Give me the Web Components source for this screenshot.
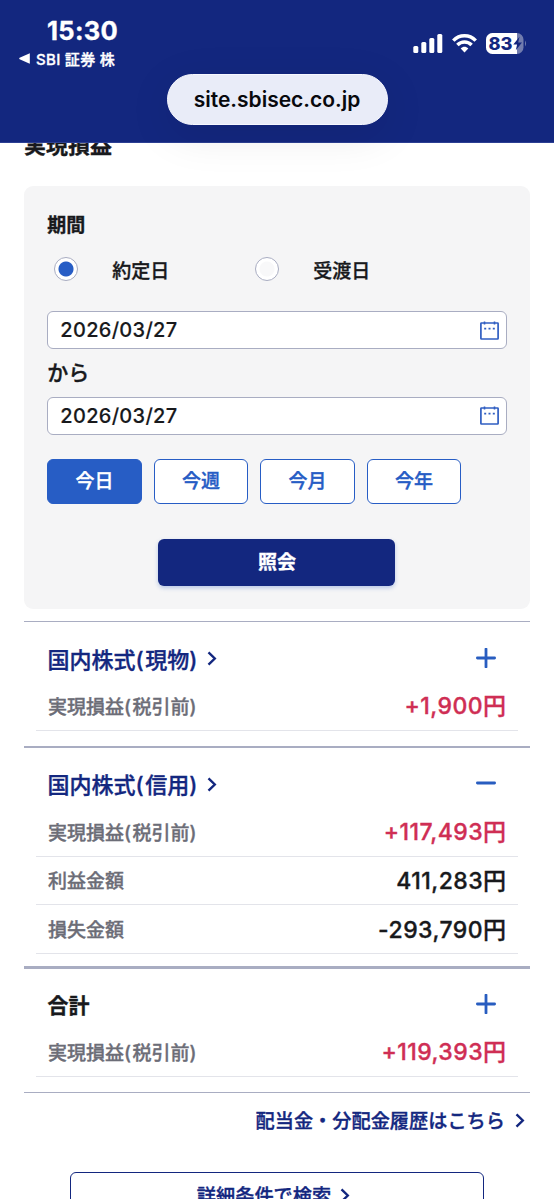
<!DOCTYPE html>
<html lang="ja">
<head>
<meta charset="utf-8">
<title>実現損益</title>
<style>
  body {
    margin: 0;
    width: 554px;
    height: 1199px;
    overflow: hidden;
    background: #fff;
    color: #18191c;
    font-family: Inter, "Noto Sans CJK JP", sans-serif;
    font-weight: 500;
    -webkit-text-stroke: 0.35px currentColor;
    --navy: #13277f;
    --blue: #275dc5;
    --line: #a9adc2;
  }
</style>
</head>
<body>
<profit-page></profit-page>
<script>
class StatusHeader extends HTMLElement {
  connectedCallback() {
    this.attachShadow({ mode: 'open' });
    this.shadowRoot.innerHTML = `
      <style>
        :host {
          display: flex;
          flex-direction: column;
          height: 143px;
          box-sizing: border-box;
          background: var(--navy);
          color: #fff;
          border-bottom: 1px solid #2c3f93;
          position: relative;
          z-index: 2;
        }
        .status {
          display: flex;
          justify-content: space-between;
          height: 74px;
        }
        .left { padding: 17px 0 0 19px; }
        .time {
          font-size: 25.5px;
          line-height: 28px;
          font-weight: 700;
          padding-left: 28px;
          letter-spacing: 0.3px;
        }
        .back {
          display: flex;
          align-items: center;
          height: 27px;
          font-size: 15px;
          letter-spacing: 0.3px;
          gap: 6px;
          white-space: nowrap;
        }
        .right {
          display: flex;
          gap: 9px;
          padding: 33px 27px 0 0;
        }
        svg { display: block; -webkit-text-stroke: 0; }
        .url {
          align-self: center;
          width: 221px;
          height: 51px;
          border-radius: 26px;
          box-sizing: border-box;
          border: 1px solid #f7f8ff;
          background: #e9ecf8;
          color: #08090d;
          font-size: 21px;
          line-height: 49px;
          text-align: center;
          font-weight: 600;
          -webkit-text-stroke: 0;
          box-shadow: 0 10px 45px rgba(0, 0, 0, 0.09);
        }
      </style>
      <div class="status">
        <div class="left">
          <div class="time">15:30</div>
          <div class="back">
            <svg width="11" height="11" viewBox="0 0 11 11"><path d="M10.8.2v10.6L.6 6.2q-.8-.7 0-1.4z" fill="#fff"/></svg>
            <span>SBI 証券 株</span>
          </div>
        </div>
        <div class="right">
          <svg width="30" height="21" viewBox="0 0 30 21" fill="#fff">
            <rect x="0.3" y="13" width="5" height="7" rx="1.5"/>
            <rect x="8.3" y="9" width="5" height="11" rx="1.5"/>
            <rect x="16.3" y="5" width="5" height="15" rx="1.5"/>
            <rect x="24.3" y="1" width="5" height="19" rx="1.5"/>
          </svg>
          <svg width="25" height="20" viewBox="0 0 25 20" fill="none" stroke="#fff" stroke-width="3.5">
            <path d="M1.3 7.6C7.5 1.2 17.5 1.2 23.7 7.6"/>
            <path d="M5.4 12C9.4 8 15.6 8 19.6 12"/>
            <path d="M8.7 15.4C11 13.2 14 13.2 16.3 15.4L12.5 19.4z" fill="#fff" stroke="none"/>
          </svg>
          <svg width="41" height="21" viewBox="0 0 41 21">
            <defs><clipPath id="level"><rect width="31" height="21"/></clipPath></defs>
            <rect width="37.5" height="21" rx="6.5" fill="#717cae"/>
            <rect width="37.5" height="21" rx="6.5" fill="#fff" clip-path="url(#level)"/>
            <path d="M39 7.5q2 3 0 6z" fill="#717cae"/>
            <text x="2.5" y="16.8" font-size="17" font-weight="800" textLength="24" lengthAdjust="spacingAndGlyphs" fill="#13277f">83</text>
            <path d="M33.5 3.8l-6.2 7.6h3.8l-1.3 5.8 6.2-7.6h-3.8z" fill="#13277f"/>
          </svg>
        </div>
      </div>
      <div class="url">site.sbisec.co.jp</div>
    `;
  }
}
customElements.define('status-header', StatusHeader);

class RadioOption extends HTMLElement {
  connectedCallback() {
    this.attachShadow({ mode: 'open' });
    this.shadowRoot.innerHTML = `
      <style>
        :host {
          display: flex;
          align-items: center;
          width: 201px;
          gap: 34px;
          font-size: 19px;
        }
        i {
          width: 24px;
          height: 24px;
          box-sizing: border-box;
          border: 1.5px solid var(--line);
          border-radius: 50%;
          background: radial-gradient(circle, var(--dot, #f8f8f9) 7px, #fff 8px);
        }
        :host([checked]) { --dot: var(--blue); }
      </style>
      <i></i><slot></slot>
    `;
  }
}
customElements.define('radio-option', RadioOption);

class DateField extends HTMLElement {
  connectedCallback() {
    this.attachShadow({ mode: 'open' });
    this.shadowRoot.innerHTML = `
      <style>
        :host {
          display: flex;
          align-items: center;
          justify-content: space-between;
          height: 38px;
          box-sizing: border-box;
          padding: 0 7px 0 12px;
          border: 1.5px solid var(--line);
          border-radius: 6px;
          background: #fff;
          font-size: 20px;
          letter-spacing: 0.3px;
          -webkit-text-stroke: 0.15px currentColor;
        }
      </style>
      <span><slot></slot></span>
      <svg width="19" height="19" viewBox="0 0 19 19" fill="none" stroke="#315fc2">
        <rect x="0.9" y="2" width="17.2" height="16" rx="0.5" stroke-width="1.7"/>
        <path d="M4.5.5v3M14.5.5v3" stroke-width="1.6"/>
        <path d="M4.2 7.7h2M8.5 7.7h2M12.8 7.7h2" stroke-width="1.8"/>
      </svg>
    `;
  }
}
customElements.define('date-field', DateField);

class RangeButton extends HTMLElement {
  connectedCallback() {
    this.attachShadow({ mode: 'open' });
    this.shadowRoot.innerHTML = `
      <style>
        :host {
          display: block;
          width: 94.5px;
          height: 45px;
          box-sizing: border-box;
          border: 1.5px solid var(--blue);
          border-radius: 6px;
          background: #fff;
          color: var(--blue);
          font-size: 19px;
          line-height: 44px;
          text-align: center;
        }
        :host([active]) {
          background: var(--blue);
          color: #fff;
        }
      </style>
      <slot></slot>
    `;
  }
}
customElements.define('range-button', RangeButton);

class ArrowRight extends HTMLElement {
  connectedCallback() {
    this.attachShadow({ mode: 'open' });
    this.shadowRoot.innerHTML = `
      <style>
        :host { display: block; width: 10px; height: 15px; }
        svg { display: block; }
      </style>
      <svg width="10" height="15" viewBox="0 0 10 15" fill="none" stroke="#13277f" stroke-width="2.4"><path d="M1.5 1.3l6.3 6.2-6.3 6.2"/></svg>
    `;
  }
}
customElements.define('arrow-right', ArrowRight);

class SearchPanel extends HTMLElement {
  connectedCallback() {
    this.attachShadow({ mode: 'open' });
    this.shadowRoot.innerHTML = `
      <style>
        :host {
          display: flex;
          flex-direction: column;
          height: 423px;
          box-sizing: border-box;
          padding: 25px 23.5px 0 23.3px;
          border-radius: 9px;
          background: #f5f5f6;
        }
        h2 {
          margin: 0;
          font-size: 19px;
          line-height: 29px;
          font-weight: 700;
        }
        .radios {
          display: flex;
          height: 58px;
          padding: 0 7px;
          margin-bottom: 13px;
        }
        .from {
          font-size: 21px;
          line-height: 48px;
          height: 47.5px;
        }
        .ranges {
          display: flex;
          gap: 12px;
          margin-top: 24px;
        }
        .submit {
          align-self: center;
          width: 237px;
          height: 47px;
          margin-top: 35px;
          border-radius: 6px;
          background: var(--navy);
          color: #fff;
          font-size: 19px;
          line-height: 47px;
          font-weight: 700;
          text-align: center;
          box-shadow: 0 2px 4px rgba(39, 93, 197, 0.3);
        }
      </style>
      <h2>期間</h2>
      <div class="radios">
        <radio-option checked>約定日</radio-option>
        <radio-option>受渡日</radio-option>
      </div>
      <date-field>2026/03/27</date-field>
      <div class="from">から</div>
      <date-field>2026/03/27</date-field>
      <div class="ranges">
        <range-button active>今日</range-button>
        <range-button>今週</range-button>
        <range-button>今月</range-button>
        <range-button>今年</range-button>
      </div>
      <div class="submit">照会</div>
    `;
  }
}
customElements.define('search-panel', SearchPanel);

// Gives the half-width brackets a little air next to the kanji
function spaceBrackets(text) {
  return text.replace(/[()]/g, '<b style="font-weight: inherit; letter-spacing: 1.5px">$&</b>');
}

class ProfitRow extends HTMLElement {
  connectedCallback() {
    this.attachShadow({ mode: 'open' });
    this.shadowRoot.innerHTML = `
      <style>
        :host {
          display: flex;
          align-items: center;
          justify-content: space-between;
          height: 48.75px;
          box-sizing: border-box;
          margin: 0 12px;
          padding: 0 12px 1px;
          border-bottom: 1.5px solid #e3e4ea;
          white-space: nowrap;
        }
        .label { font-size: 19px; color: #6c6d77; }
        .value {
          font-size: 23px;
          letter-spacing: 0.45px;
          margin: -2px -0.5px 0 0;
        }
        :host([plus]) .value { color: #cf2e54; }
      </style>
      <span class="label">${spaceBrackets(this.getAttribute('label'))}</span>
      <span class="value"><slot></slot></span>
    `;
  }
}
customElements.define('profit-row', ProfitRow);

class ProfitSection extends HTMLElement {
  connectedCallback() {
    const total = this.hasAttribute('total');
    const bar = this.hasAttribute('open') ? '' : '<path d="M10 1v18"/>';
    this.attachShadow({ mode: 'open' });
    this.shadowRoot.innerHTML = `
      <style>
        :host {
          display: block;
          border-top: var(--bar, 1px) solid var(--line);
          padding-bottom: var(--gap, 15px);
        }
        .head {
          display: flex;
          align-items: center;
          justify-content: space-between;
          height: var(--head, 60px);
          box-sizing: border-box;
          padding: 13px 34px 0 23.5px;
        }
        .name {
          display: flex;
          align-items: center;
          gap: 8px;
          color: var(--navy);
          font-size: 22px;
          white-space: nowrap;
        }
        .name > span { margin-top: -2px; }
        :host([total]) .name {
          color: #18191c;
          font-weight: 700;
          font-size: 21px;
        }
        svg { display: block; margin-top: -2px; }
      </style>
      <div class="head">
        <span class="name"><span>${spaceBrackets(this.getAttribute('name'))}</span>${total ? '' : '<arrow-right></arrow-right>'}</span>
        <svg width="20" height="20" viewBox="0 0 20 20" fill="none" stroke="#285dc0" stroke-width="2.8" stroke-linecap="round"><path d="M1.4 10h17.2"/>${bar}</svg>
      </div>
      <slot></slot>
    `;
  }
}
customElements.define('profit-section', ProfitSection);

class ProfitPage extends HTMLElement {
  connectedCallback() {
    this.attachShadow({ mode: 'open' });
    this.shadowRoot.innerHTML = `
      <style>
        :host { display: block; }
        main {
          display: flex;
          flex-direction: column;
          padding: 0 24px;
        }
        h1 {
          margin: -14px 0 0;
          height: 57px;
          font-size: 22px;
          line-height: 32px;
          font-weight: 700;
        }
        search-panel { margin-bottom: 12px; }
        .history {
          display: flex;
          align-items: center;
          justify-content: flex-end;
          gap: 10px;
          height: 55px;
          margin-bottom: 24px;
          padding-right: 5px;
          border-top: 1px solid var(--line);
          color: var(--navy);
          font-size: 19.2px;
        }
        .detail {
          display: flex;
          justify-content: center;
          gap: 9px;
          align-items: center;
          align-self: center;
          width: 414px;
          height: 47px;
          box-sizing: border-box;
          padding-right: 7px;
          border: 1.5px solid var(--navy);
          border-radius: 6px;
          color: var(--navy);
          font-size: 19.2px;
        }
      </style>
      <status-header></status-header>
      <main>
        <h1>実現損益</h1>
        <search-panel></search-panel>
        <profit-section name="国内株式(現物)">
          <profit-row label="実現損益(税引前)" plus>+1,900円</profit-row>
        </profit-section>
        <profit-section name="国内株式(信用)" open style="--bar: 2px; --gap: 12px">
          <profit-row label="実現損益(税引前)" plus>+117,493円</profit-row>
          <profit-row label="利益金額">411,283円</profit-row>
          <profit-row label="損失金額">-293,790円</profit-row>
        </profit-section>
        <profit-section name="合計" total style="--bar: 3px; --head: 59px">
          <profit-row label="実現損益(税引前)" plus>+119,393円</profit-row>
        </profit-section>
        <div class="history"><span>配当金・分配金履歴はこちら</span><arrow-right></arrow-right></div>
        <div class="detail"><span>詳細条件で検索</span><arrow-right></arrow-right></div>
      </main>
    `;
  }
}
customElements.define('profit-page', ProfitPage);
</script>
</body>
</html>
